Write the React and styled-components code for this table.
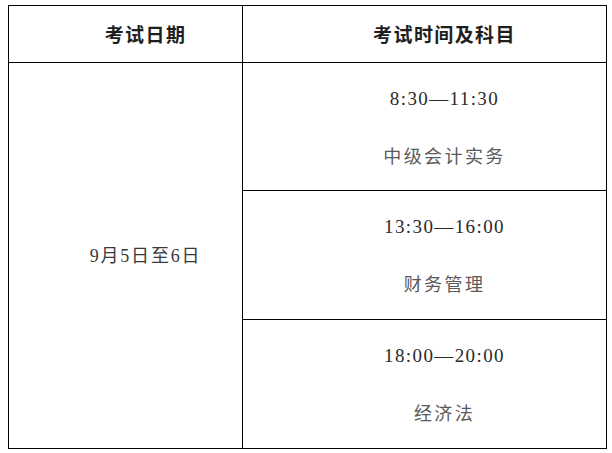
import React from 'react';
import styled, { createGlobalStyle } from 'styled-components';

const GlobalStyle = createGlobalStyle`
  html, body {
    margin: 0;
    padding: 0;
    background: #fff;
  }
  * {
    box-sizing: border-box;
  }
`;

const Page = styled.div`
  width: 612px;
  height: 453px;
  padding: 5px 0 0 8px;
  background: #fff;
`;

const Table = styled.div`
  display: grid;
  grid-template-columns: 234px 364px;
  grid-template-rows: 57px 128px 129px 129px;
  width: 599px;
  border-top: 1px solid #000;
  border-left: 1px solid #000;
`;

const Cell = styled.div`
  display: flex;
  flex-direction: column;
  align-items: center;
  justify-content: center;
  padding-left: ${(p) => p.$indent || 40}px;
  border-right: 1px solid #000;
  border-bottom: 1px solid #000;
  grid-row: ${(p) => p.$row || 'auto'};
  gap: 36px;
`;

const HeadText = styled.span`
  font-family: 'Noto Sans CJK SC', sans-serif;
  font-weight: 700;
  font-size: 19px;
  letter-spacing: 1.4px;
  line-height: 20px;
  color: #1e1e1e;
`;

const Time = styled.span`
  font-family: 'Liberation Serif', 'Noto Sans CJK SC', serif;
  font-size: 19px;
  letter-spacing: 1.4px;
  line-height: 20px;
  color: #2a2a2a;
`;

const Subject = styled.span`
  font-family: 'Noto Sans CJK SC', sans-serif;
  font-size: 18px;
  font-weight: 400;
  letter-spacing: 2.4px;
  line-height: 20px;
  color: #5a5a5a;
`;

const DateText = styled.span`
  font-family: 'Liberation Serif', 'Noto Sans CJK SC', serif;
  font-size: 18px;
  letter-spacing: 1.8px;
  line-height: 20px;
  color: #3a3a3a;
`;

const sessions = [
  { time: '8:30—11:30', subject: '中级会计实务' },
  { time: '13:30—16:00', subject: '财务管理' },
  { time: '18:00—20:00', subject: '经济法' },
];

const App = () => (
  <Page>
    <GlobalStyle />
    <Table>
      <Cell>
        <HeadText>考试日期</HeadText>
      </Cell>
      <Cell>
        <HeadText>考试时间及科目</HeadText>
      </Cell>
      <Cell $row="2 / span 3">
        <DateText>9月5日至6日</DateText>
      </Cell>
      {sessions.map((s, i) => (
        <Cell key={i}>
          <Time>{s.time}</Time>
          <Subject>{s.subject}</Subject>
        </Cell>
      ))}
    </Table>
  </Page>
);

export default App;
